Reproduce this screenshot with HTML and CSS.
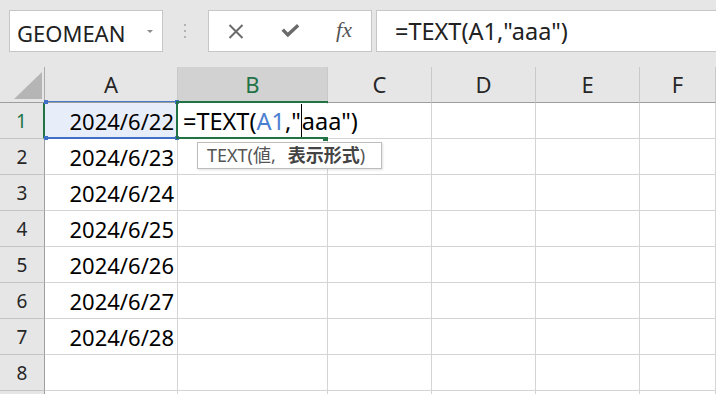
FILE: index.html
```html
<!DOCTYPE html>
<html lang="ja">
<head>
    <meta charset="UTF-8">
    <title>TEXT関数</title>
    <link rel="stylesheet" href="styles.css">
</head>

<body>
<div class="toolbar">
    <div class="namebox">
        <span class="name">GEOMEAN</span>
        <span class="drop"></span>
    </div>
    <div class="grip"><i></i><i></i><i></i></div>
    <div class="buttons">
        <div class="btn">
            <svg width="16" height="15" viewBox="0 0 16 15">
                <path d="M1.5 1 L14.5 14 M14.5 1 L1.5 14" stroke="#6b6b6b" stroke-width="2" fill="none"/>
            </svg>
        </div>
        <div class="btn">
            <svg width="19" height="14" viewBox="0 0 19 14">
                <path d="M0.5 6.8 L3 4.6 L6.8 8.4 L16 0 L18.3 2.4 L6.8 13.2 Z" fill="#6b6b6b"/>
            </svg>
        </div>
        <div class="btn fx">fx</div>
    </div>
    <div class="formula">=TEXT(A1,"aaa")</div>
</div>

<div class="sheet">
    <div class="corner">
        <svg width="28" height="27" viewBox="0 0 28 27"><polygon points="28,0 28,27 0,27" fill="#b5b5b5"/></svg>
    </div>
    <div class="ch">A</div>
    <div class="ch on">B</div>
    <div class="ch">C</div>
    <div class="ch">D</div>
    <div class="ch">E</div>
    <div class="ch">F</div>

    <div class="rh on">1</div>
    <div class="c num sel">2024/6/22</div>
    <div class="c"></div><div class="c"></div><div class="c"></div><div class="c"></div><div class="c"></div>

    <div class="rh">2</div>
    <div class="c num">2024/6/23</div>
    <div class="c"></div><div class="c"></div><div class="c"></div><div class="c"></div><div class="c"></div>

    <div class="rh">3</div>
    <div class="c num">2024/6/24</div>
    <div class="c"></div><div class="c"></div><div class="c"></div><div class="c"></div><div class="c"></div>

    <div class="rh">4</div>
    <div class="c num">2024/6/25</div>
    <div class="c"></div><div class="c"></div><div class="c"></div><div class="c"></div><div class="c"></div>

    <div class="rh">5</div>
    <div class="c num">2024/6/26</div>
    <div class="c"></div><div class="c"></div><div class="c"></div><div class="c"></div><div class="c"></div>

    <div class="rh">6</div>
    <div class="c num">2024/6/27</div>
    <div class="c"></div><div class="c"></div><div class="c"></div><div class="c"></div><div class="c"></div>

    <div class="rh">7</div>
    <div class="c num">2024/6/28</div>
    <div class="c"></div><div class="c"></div><div class="c"></div><div class="c"></div><div class="c"></div>

    <div class="rh">8</div>
    <div class="c"></div><div class="c"></div><div class="c"></div><div class="c"></div><div class="c"></div><div class="c"></div>

    <div class="rh"></div>
    <div class="c"></div><div class="c"></div><div class="c"></div><div class="c"></div><div class="c"></div><div class="c"></div>

    <!-- range reference A1 -->
    <div class="ref">
        <i class="dot tl"></i><i class="dot tr"></i><i class="dot bl"></i><i class="dot br"></i>
    </div>

    <!-- in-cell editor B1 -->
    <div class="editor">
        <span class="etext">=TEXT(<span class="refc">A1</span>,"<span class="cursor"></span>aaa")</span>
    </div>

    <div class="tip">TEXT(値,<b>表示形式</b>)</div>
</div>
</body>
</html>
```

FILE: styles.css
```css
* {
    box-sizing: border-box;
}

body {
    margin: 0;
    height: 394px;
    background: #e6e6e6;
    font-family: "Noto Sans", "Noto Sans CJK JP", sans-serif;
    color: #000;
    overflow: hidden;
}

/* formula bar */

.toolbar {
    display: flex;
    height: 67px;
    padding: 10px 0 0 9px;
}

.namebox {
    display: flex;
    align-items: center;
    width: 154px;
    height: 42px;
    background: #fff;
    border: 1px solid #c6c6c6;
    padding-left: 7px;
}

.name {
    font-size: 22px;
    color: #222;
    padding-top: 3px;
}

.drop {
    margin-left: auto;
    margin-right: 9px;
    width: 0;
    height: 0;
    border-left: 3px solid transparent;
    border-right: 3px solid transparent;
    border-top: 3px solid #8a8a8a;
}

.grip {
    display: flex;
    flex-direction: column;
    align-items: center;
    justify-content: center;
    gap: 4px;
    width: 45px;
    height: 42px;
    padding-right: 2px;
}

.grip i {
    display: block;
    width: 2px;
    height: 2px;
    background: #b3b3b3;
}

.buttons {
    display: flex;
    width: 164px;
    height: 42px;
    background: #fff;
    border: 1px solid #c6c6c6;
}

.btn {
    flex: 1;
    display: flex;
    align-items: center;
    justify-content: center;
}

.fx {
    font-family: "Liberation Serif", serif;
    font-style: italic;
    font-size: 22px;
    color: #555;
    padding-bottom: 2px;
}

.formula {
    flex: 1;
    height: 42px;
    margin-left: 4px;
    background: #fff;
    border: 1px solid #c6c6c6;
    border-right: 0;
    padding: 2px 0 0 18px;
    font-size: 23.5px;
    line-height: 36px;
    color: #222;
}

/* sheet */

.sheet {
    position: relative;
    display: grid;
    grid-template-columns: 45px 133px 150px 104px 104px 104px 1fr;
    grid-auto-rows: 36px;
    background: #fff;
}

.corner {
    display: flex;
    align-items: flex-end;
    justify-content: flex-end;
    padding: 0 2px 3px 0;
    background: #e6e6e6;
    border-right: 1px solid #ababab;
    border-bottom: 1px solid #9e9e9e;
}

.ch {
    display: flex;
    align-items: center;
    justify-content: center;
    background: #e6e6e6;
    border-right: 1px solid #c9c9c9;
    border-bottom: 1px solid #9e9e9e;
    font-size: 22px;
    color: #262626;
    padding-bottom: 1px;
}

.ch.on {
    background: #d2d2d2;
    color: #217346;
    border-bottom: 2px solid #217346;
}

.rh {
    display: flex;
    align-items: center;
    justify-content: center;
    background: #e6e6e6;
    border-right: 1px solid #9e9e9e;
    border-bottom: 1px solid #c4c4c4;
    font-size: 19px;
    color: #262626;
}

.rh.on {
    color: #217346;
    border-right: 2px solid #217346;
}

.c {
    border-right: 1px solid #d4d4d4;
    border-bottom: 1px solid #d4d4d4;
}

.num {
    display: flex;
    align-items: center;
    justify-content: flex-end;
    padding-right: 3px;
    font-size: 22px;
}

.sel {
    background: #e8eef9;
}

/* overlays, placed against the sheet's top-left corner */

.ref {
    position: absolute;
    left: 45px;
    top: 34px;
    width: 133px;
    height: 38px;
    border-top: 1px solid #4a78c8;
    border-bottom: 2px solid #3f6fc6;
}

.dot {
    position: absolute;
    width: 4px;
    height: 4px;
    background: #3f6fc6;
}

.tl { left: -1px; top: -2px; }
.tr { right: -1px; top: -2px; }
.bl { left: -1px; bottom: -3px; }
.br { right: -1px; bottom: -3px; }

.editor {
    position: absolute;
    left: 176px;
    top: 34px;
    width: 152px;
    height: 37px;
    border-top: 2px solid #217346;
    border-left: 2px solid #217346;
    display: flex;
    align-items: center;
    padding-left: 5px;
}

.editor::after {
    content: "";
    position: absolute;
    left: -2px;
    bottom: -1px;
    width: 147px;
    height: 2px;
    background: #217346;
}

.editor::before {
    content: "";
    position: absolute;
    left: 145px;
    bottom: -3px;
    width: 5px;
    height: 4px;
    background: #217346;
}

.etext {
    white-space: nowrap;
    background: #fff;
    font-size: 23.5px;
    line-height: 34px;
    padding-right: 6px;
}

.refc {
    color: #4a7fd0;
}

.cursor {
    display: inline-block;
    width: 1px;
    height: 34px;
    background: #000;
    vertical-align: top;
}

.tip {
    position: absolute;
    left: 197px;
    top: 75px;
    width: 185px;
    height: 27px;
    background: #fff;
    border: 1px solid #bdbdbd;
    box-shadow: 1px 1px 2px rgb(0 0 0 / 12%);
    padding-left: 9px;
    font-size: 18px;
    line-height: 24px;
    color: #555;
}

.tip b {
    margin-left: 12px;
    color: #444;
}
```
